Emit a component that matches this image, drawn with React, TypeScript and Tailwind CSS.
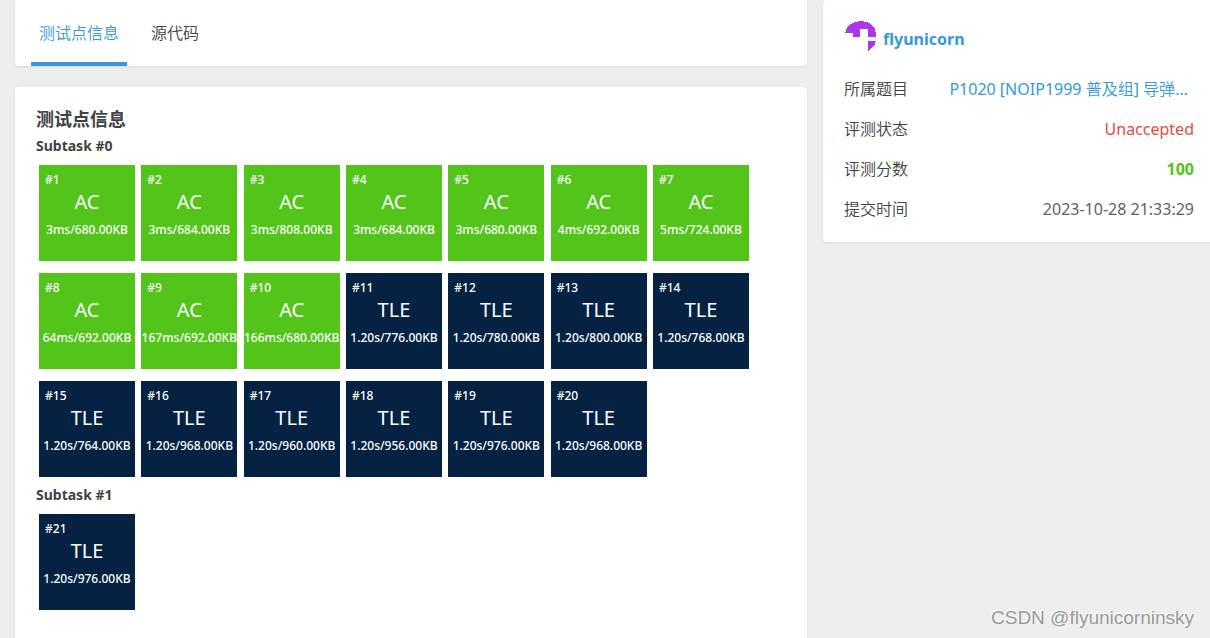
import React from 'react';
import clsx from 'clsx';

type Status = 'AC' | 'TLE';

interface TestCase {
    id: number;
    status: Status;
    usage: string;
}

interface Subtask {
    id: number;
    cases: TestCase[];
}

const subtasks: Subtask[] = [
    {
        id: 0,
        cases: [
            { id: 1, status: 'AC', usage: '3ms/680.00KB' },
            { id: 2, status: 'AC', usage: '3ms/684.00KB' },
            { id: 3, status: 'AC', usage: '3ms/808.00KB' },
            { id: 4, status: 'AC', usage: '3ms/684.00KB' },
            { id: 5, status: 'AC', usage: '3ms/680.00KB' },
            { id: 6, status: 'AC', usage: '4ms/692.00KB' },
            { id: 7, status: 'AC', usage: '5ms/724.00KB' },
            { id: 8, status: 'AC', usage: '64ms/692.00KB' },
            { id: 9, status: 'AC', usage: '167ms/692.00KB' },
            { id: 10, status: 'AC', usage: '166ms/680.00KB' },
            { id: 11, status: 'TLE', usage: '1.20s/776.00KB' },
            { id: 12, status: 'TLE', usage: '1.20s/780.00KB' },
            { id: 13, status: 'TLE', usage: '1.20s/800.00KB' },
            { id: 14, status: 'TLE', usage: '1.20s/768.00KB' },
            { id: 15, status: 'TLE', usage: '1.20s/764.00KB' },
            { id: 16, status: 'TLE', usage: '1.20s/968.00KB' },
            { id: 17, status: 'TLE', usage: '1.20s/960.00KB' },
            { id: 18, status: 'TLE', usage: '1.20s/956.00KB' },
            { id: 19, status: 'TLE', usage: '1.20s/976.00KB' },
            { id: 20, status: 'TLE', usage: '1.20s/968.00KB' },
        ],
    },
    {
        id: 1,
        cases: [{ id: 21, status: 'TLE', usage: '1.20s/976.00KB' }],
    },
];

function TestCaseTile({ id, status, usage }: TestCase) {
    return (
        <div className={clsx('h-24 text-center text-white', status === 'AC' ? 'bg-[#52c41a]' : 'bg-[#052242]')}>
            <div className="px-1.5 pt-1.5 text-left text-xs leading-[18px] font-medium">#{id}</div>
            <div className="text-xl leading-[26px]">{status}</div>
            <div className="mt-1.5 text-xs leading-[18px] font-medium whitespace-nowrap">{usage}</div>
        </div>
    );
}

function InfoRow({ label, children }: { label: string; children: React.ReactNode }) {
    return (
        <div className="flex h-10 items-center justify-between whitespace-nowrap">
            <dt className="font-[350]">{label}</dt>
            <dd>{children}</dd>
        </div>
    );
}

export default function App() {
    return (
        <div className="flex min-h-screen items-start gap-4 bg-[#eee] pl-[15px] font-['Noto_Sans','Noto_Sans_CJK_SC',sans-serif] text-base text-[#404244]">
            {/* --- MAIN COLUMN --- */}
            <main className="flex min-h-screen min-w-0 flex-1 flex-col gap-[21px]">
                <nav className="flex h-[66px] rounded-b-sm bg-white px-4 font-[350] shadow-[0_1px_2px_rgba(26,26,26,0.1)]">
                    <a href="#info" className="border-b-4 border-[#3498db] px-2 pt-[21px] text-[#3498db]">测试点信息</a>
                    <a href="#code" className="ml-4 px-2 pt-[21px]">源代码</a>
                </nav>

                <section id="info" className="flex-1 rounded-t-sm bg-white px-[21px] pt-[18px] shadow-[0_1px_2px_rgba(26,26,26,0.1)]">
                    <h1 className="text-lg leading-7 font-bold">测试点信息</h1>
                    {subtasks.map((subtask) => (
                        <div key={subtask.id} className="mb-[5px]">
                            <h2 className="text-sm leading-[26px] font-bold">Subtask #{subtask.id}</h2>
                            <div className="mx-[3px] mt-1.5 grid max-w-[710px] grid-cols-[repeat(auto-fill,96px)] justify-between gap-x-1.5 gap-y-3">
                                {subtask.cases.map((testCase) => (
                                    <TestCaseTile key={testCase.id} {...testCase} />
                                ))}
                            </div>
                        </div>
                    ))}
                </section>
            </main>

            {/* --- SIDEBAR --- */}
            <aside className="flex min-h-screen w-[387px] shrink-0 flex-col justify-between">
                <section className="rounded-l-sm bg-white pt-5 pr-4 pb-[13px] pl-[21px] shadow-[0_1px_2px_rgba(26,26,26,0.1)]">
                    <div className="flex h-[49px] items-start gap-[7px]">
                        <svg viewBox="0 0 32 32" className="size-8" shapeRendering="crispEdges" aria-hidden="true">
                            <path fill="#ab37e8" d="M1 13C2 6 9 1 17 1s15 5 15 13v3h-8V9h-8v8H9v-4ZM24 21h8c-1 4-4 8-8 10Z" />
                        </svg>
                        <a href="#user" className="pt-[7px] font-bold text-[#3498db]">flyunicorn</a>
                    </div>
                    <dl>
                        <InfoRow label="所属题目">
                            <a href="#problem" className="pr-1.5 text-[#3498db]">
                                P1020 [NOIP1999 <span className="font-[350]">普及组</span>] <span className="font-[350]">导弹</span>...
                            </a>
                        </InfoRow>
                        <InfoRow label="评测状态">
                            <span className="text-[#e74c3c]">Unaccepted</span>
                        </InfoRow>
                        <InfoRow label="评测分数">
                            <span className="font-bold text-[#52c41a]">100</span>
                        </InfoRow>
                        <InfoRow label="提交时间">
                            <time dateTime="2023-10-28T21:33:29" className="text-[#606266]">2023-10-28 21:33:29</time>
                        </InfoRow>
                    </dl>
                </section>

                <p className="pr-4 pb-1.5 text-right font-['Liberation_Sans',sans-serif] text-[19px] leading-7 text-[#999] [text-shadow:-1px_-1px_0_#fff]">
                    CSDN @flyunicorninsky
                </p>
            </aside>
        </div>
    );
}
